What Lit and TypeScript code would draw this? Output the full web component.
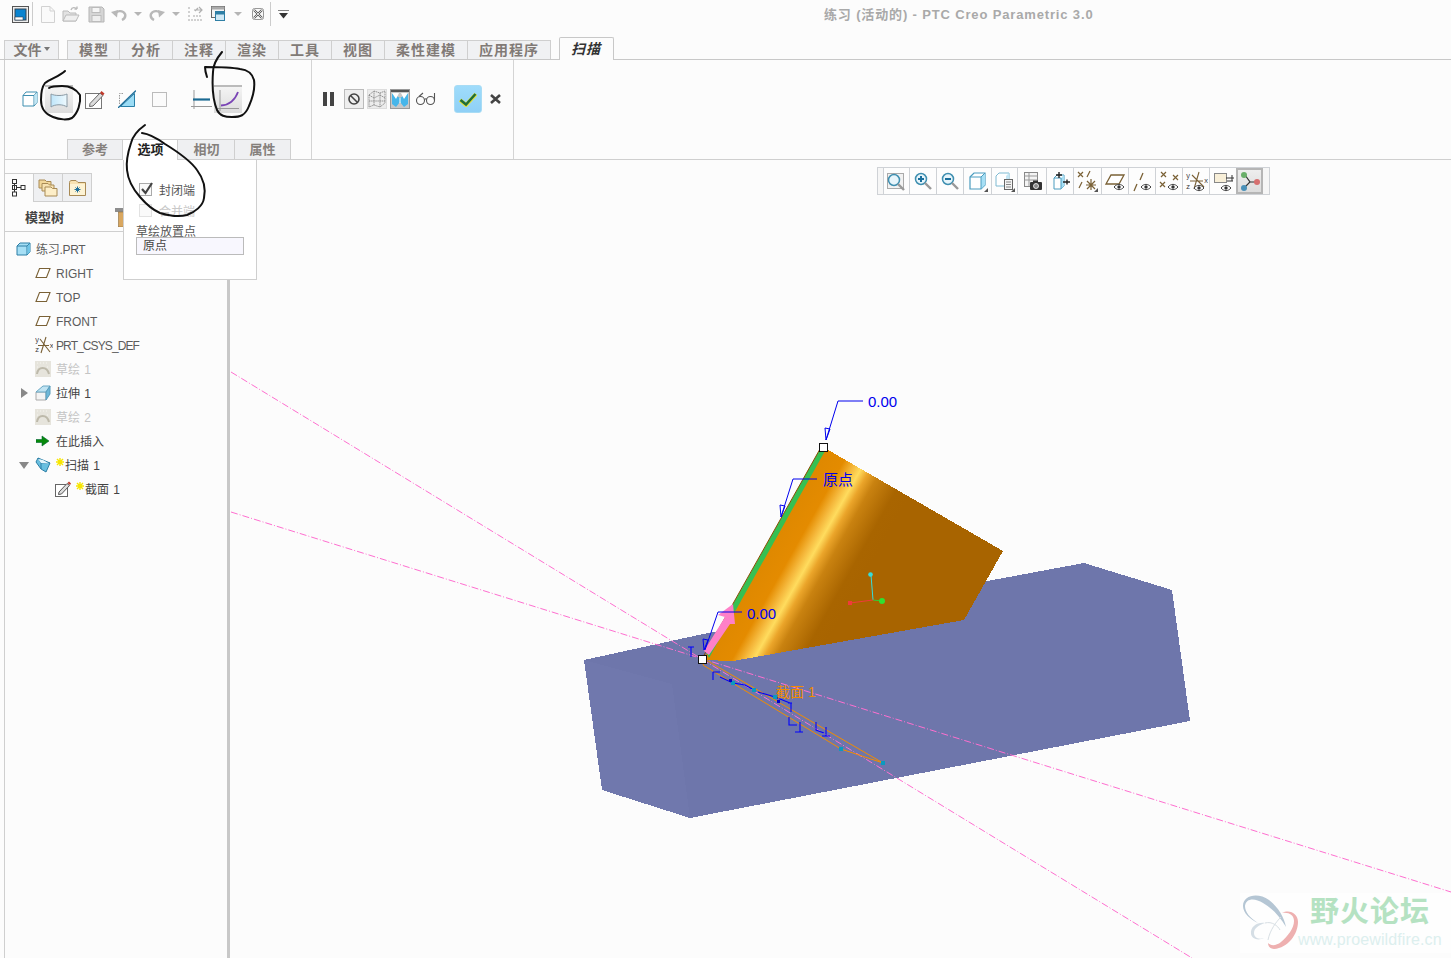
import { LitElement, html, css, svg } from "lit";
import { customElement } from "lit/decorators.js";

const sv = (w: number, h: number, body: unknown, cls = "") =>
  html`<svg class=${cls} width=${w} height=${h} viewBox="0 0 ${w} ${h}" fill="none">${body}</svg>`;

const caret = sv(8, 5, svg`<path d="M0 0H8L4 4Z" fill="#b5b5b5"/>`);

/* quick access toolbar */
const qat = {
  main: sv(17, 17, svg`<rect x=".5" y=".5" width="16" height="16" fill="#eee" stroke="#555"/><rect x="3" y="3" width="11" height="11" fill="#0a84d0" stroke="#345"/><rect x="3" y="11" width="8" height="3" fill="#fff" stroke="#345" stroke-width=".6"/>`),
  newf: sv(14, 17, svg`<path d="M.5.5H9L13.500 5V16.500H.5Z" fill="#fafafa" stroke="#d2d2d2"/><path d="M9 .5V5H13.500" stroke="#d2d2d2"/>`),
  open: sv(18, 17, svg`<path d="M1 5H6L8 7H14V15H1Z" fill="#e2e2e2" stroke="#bbb"/><path d="M1 15L4 9H17L14 15Z" fill="#efefef" stroke="#bbb"/><path d="M9 4C10 1 13 1 15 3M15 3V.5M15 3H12.500" stroke="#bbb" stroke-width="1.400"/>`),
  save: sv(17, 17, svg`<path d="M1 1H14L16 3V16H1Z" fill="#d5d5d5" stroke="#b5b5b5"/><rect x="4" y="1.500" width="8" height="5" fill="#f5f5f5" stroke="#bbb"/><rect x="4" y="9.500" width="9" height="6" fill="#eee" stroke="#bbb"/>`),
  undo: sv(16, 13, svg`<path d="M4 7C5 2 12 2 14 6C15 9 13 11 11 12" stroke="#b8b8b8" stroke-width="2.400"/><path d="M0 4L6 9.500L7 2Z" fill="#b8b8b8"/>`),
  redo: sv(16, 13, svg`<path d="M12 7C11 2 4 2 2 6C1 9 3 11 5 12" stroke="#b8b8b8" stroke-width="2.400"/><path d="M16 4L10 9.500L9 2Z" fill="#b8b8b8"/>`),
  regen: sv(16, 16, svg`<path d="M1 2H4M1 6H4M1 10H4M1 14H15M6 10H15" stroke="#c2c2c2" stroke-dasharray="2 1" stroke-width="1.500"/><path d="M7 4H15M12 1L15 4L12 7M11 2L8 5" stroke="#b0b0b0" stroke-width="1.200"/>`),
  wins: sv(18, 17, svg`<rect x=".5" y=".5" width="13" height="11" fill="#f4f4f4" stroke="#666"/><rect x=".5" y=".5" width="13" height="3" fill="#aaa"/><rect x="4.500" y="5.500" width="9" height="9" fill="#cfe8f5" stroke="#2f7fa5"/><rect x="4.500" y="5.500" width="9" height="3" fill="#2f7fa5"/>`),
  close: sv(12, 12, svg`<rect x=".5" y=".5" width="11" height="11" rx="2" fill="#fafafa" stroke="#999"/><path d="M2 2L10 10M10 2L2 10" stroke="#555" stroke-width="2.200"/><path d="M2 2L10 10M10 2L2 10" stroke="#fff" stroke-width=".8"/>`),
  menu: sv(11, 9, svg`<path d="M0 0H11" stroke="#333" stroke-width="1.200"/><path d="M1 3H10L5.500 8.500Z" fill="#333"/>`),
};

/* ribbon */
const rib = {
  solid: sv(16, 16, svg`<path d="M1 4.500L4 1H15V11.500L12 15H1Z" fill="#fff" stroke="#3f8fb0"/><path d="M1 4.500H12V15M12 4.500L15 1" stroke="#3f8fb0"/><path d="M12.500 4.500L15 1.500V11L12.500 14Z" fill="#bfe6f5"/>`),
  surf: sv(18, 17, svg`<defs><linearGradient id="sf" x1="0" x2="1" y1="0" y2="0"><stop offset="0" stop-color="#bfe6fa"/><stop offset="1" stop-color="#eef9fe"/></linearGradient></defs><path d="M1 2C5 4 13 4 17 2V15C13 12 5 12 1 15Z" fill="url(#sf)" stroke="#8a9aa5"/>`),
  sketch: sv(20, 19, svg`<rect x=".5" y="3.500" width="16" height="15" fill="#fff" stroke="#777"/><path d="M5 13.500L15 3L18 5.500L8 16L4.500 16.500Z" fill="#ddd" stroke="#666"/><path d="M15 3L16.500 1L19.500 3.500L18 5.500Z" fill="#c0392b"/>`),
  thick: sv(18, 18, svg`<path d="M5 3.500H1.500V15" stroke="#999" stroke-dasharray="1.500 1"/><path d="M2.500 16.500L16.500 3.500V16.500Z" fill="#9bdcf5" stroke="#2a80a8"/><path d="M0 18L18 .5" stroke="#1f6f9a" stroke-width="1.300"/>`),
  rect: sv(15, 15, svg`<rect x=".5" y=".5" width="14" height="14" fill="#fbfbfb" stroke="#bbb"/>`),
  plain: sv(21, 19, svg`<path d="M3 0V19M0 16.500H21" stroke="#999"/><path d="M2 9.500H19" stroke="#1b6a93" stroke-width="2.200"/>`),
  tang: sv(22, 21, svg`<path d="M3 0V21M0 18.500H22" stroke="#999"/><path d="M4 15.500C12 15 18 10 21 2" stroke="#7a45b5" stroke-width="1.800"/>`),
  pause: sv(11, 14, svg`<rect width="4" height="14" fill="#444"/><rect x="7" width="4" height="14" fill="#444"/>`),
  stop: sv(12, 12, svg`<circle cx="6" cy="6" r="5" stroke="#444" stroke-width="1.600"/><path d="M2.500 2.500L9.500 9.500" stroke="#444" stroke-width="1.600"/>`),
  wire: sv(18, 18, svg`<path d="M1 5L6 1L12 3L17 1V13L12 17L6 15L1 17Z M1 5L6 8L12 5L17 8M6 1V15M12 3V17M1 11L17 11" stroke="#707070" stroke-width=".7" stroke-dasharray="1.500 .6"/>`),
  shade: sv(18, 18, svg`<path d="M0 1H18" stroke="#555" stroke-width="2"/><path d="M1 3L9 8L17 3V14L13 17L9 12L5 17L1 14Z" fill="#47b6ea"/><path d="M1 3H8L5 9ZM10 3H17L13 9Z" fill="#fff"/><path d="M9 8V13" stroke="#fff"/>`),
  glasses: sv(20, 14, svg`<circle cx="4.500" cy="8.500" r="4" stroke="#555" stroke-width="1.100"/><circle cx="14.500" cy="8.500" r="4" stroke="#555" stroke-width="1.100"/><path d="M8.500 7.500C9.500 6.500 10.500 6.500 10.500 7.500M3 4.500L7 1M18.500 8V1" stroke="#555" stroke-width="1.100"/>`),
  check: sv(18, 15, svg`<path d="M1 8L7 13L17 2" stroke="#e7e23a" stroke-width="4"/><path d="M1.500 8L7 12.500L16.500 2" stroke="#1f6e3a" stroke-width="2.500"/>`),
  cancel: sv(11, 10, svg`<path d="M1 1L10 9M10 1L1 9" stroke="#444" stroke-width="2.600"/>`),
};

/* model tree panel */
const cube = sv(15, 14, svg`<path d="M1 4L4 1H14V10L11 13H1Z" fill="#a6dff5" stroke="#2c7fa6"/><path d="M1 4H11V13M11 4L14 1" stroke="#2c7fa6"/><path d="M11.500 4L14 1.500V10L11.500 12.500Z" fill="#6fc4e6"/>`);
const plane = sv(16, 12, svg`<path d="M4.500 1.500H15L11.500 10.500H1Z" fill="#fff" stroke="#7a6136" stroke-width="1.100"/>`);
const csys = sv(18, 18, svg`<path d="M11 1L6 17M5 3L15 16M3 9.500H14" stroke="#7a6136" stroke-width="1.100"/>
  <text x="0" y="6" class="micro">y</text><text x="0" y="16" class="micro">z</text><text x="14.500" y="12" class="micro">x</text>`);
const sk = sv(16, 16, svg`<rect width="16" height="16" fill="#e6e4dc"/><path d="M2 13C3 5 12 5 14 13" stroke="#bdb9aa" stroke-width="2"/><path d="M2 2H14M2 6H4M12 6H14" stroke="#f6f5f0" stroke-dasharray="1 2"/>`);
const ext = sv(16, 16, svg`<path d="M1 7H11V15H1Z" fill="#f4f4f4" stroke="#aaa"/><path d="M1 7L8 1H15L11 7Z" fill="#bfe3f2" stroke="#6aa8c4"/><path d="M11 7L15 1V9L11 15Z" fill="#6fb8d8" stroke="#5a9dbc"/>`);
const ins = sv(14, 12, svg`<path d="M0 4.500H6V1L13 6L6 11V7.500H0Z" fill="#078a0a" stroke="#063" stroke-width=".6"/>`, "insert");
const sweep = sv(16, 16, svg`<path d="M3 1L15 6L11 15L6 12L1 5Z" fill="#68bfe0" stroke="#2c7fa6"/><path d="M3 1L6 6L15 6M6 6L6 12" stroke="#2c7fa6"/><path d="M3 2L6 6L14 6.500L8 3Z" fill="#e5f5fb"/>`);
const secIco = sv(16, 16, svg`<rect x=".5" y="3.500" width="12" height="12" fill="#fff" stroke="#666"/><path d="M4 11L12 2.500L14.500 4.500L6.500 13L3.500 13.500Z" fill="#ddd" stroke="#555"/><path d="M12.500 2L14 .5L16 2.500L15 4Z" fill="#c0392b"/>`);
const star = sv(8, 8, svg`<path d="M4 0V8M0 4H8M1 1L7 7M7 1L1 7" stroke="#f7e600" stroke-width="1.400"/>`);
const arrR = sv(7, 10, svg`<path d="M0 0L7 5L0 10Z" fill="#888"/>`);
const arrD = sv(10, 7, svg`<path d="M0 0H10L5 7Z" fill="#888"/>`);

const tabTree = sv(14, 18, svg`<rect x=".5" y=".5" width="4" height="4" stroke="#333"/><rect x=".5" y="6.500" width="4" height="4" stroke="#333"/><rect x=".5" y="13" width="4" height="4" stroke="#333"/><rect x="9" y="6.500" width="4" height="4" stroke="#333"/><path d="M2.500 4.500V13M4.500 8.500H9" stroke="#333"/>`);
const tabFold = sv(20, 18, svg`<path d="M1 1H7L8.500 2.500H13V9H1Z" fill="#f2d79a" stroke="#a88a55"/><path d="M4 4.500H10L11.500 6H16V12H4Z" fill="#f7e2b2" stroke="#a88a55"/><path d="M7 8H13L14.500 9.500H19V17H7Z" fill="#fdeec8" stroke="#a88a55"/>`);
const tabStar = sv(17, 16, svg`<path d="M.5 2.500C.5 1 1.500.5 3 .5H7L9 2.500H16.500V15.500H.5Z" fill="#f7e2b2" stroke="#a88a55"/><rect x="1" y="4" width="15" height="11" fill="#fdf3d4"/><path d="M8.500 6.500V12.500M5.500 9.500H11.500M6.500 7.500L10.500 11.500M10.500 7.500L6.500 11.500" stroke="#1f6f9a"/>`);
const hammer = sv(9, 20, svg`<path d="M0 1H9V5H0Z" fill="#8d8d8d"/><rect x="3.500" y="5" width="5" height="15" fill="#d9a760" stroke="#8b6b3a" stroke-width=".6"/>`);

/* view toolbar */
const lens = (x: number, y: number, inner: unknown = null) => svg`<circle cx=${x} cy=${y} r="5.500" fill="#e7f5fb" stroke="#3f8fb0" stroke-width="1.500"/><path d="M${x + 4} ${y + 4}L${x + 10} ${y + 10}" stroke="#999" stroke-width="2.400"/>${inner}`;
const eye = (x: number, y: number) => svg`<path d="M${x - 5} ${y}C${x - 2} ${y - 3.500} ${x + 2} ${y - 3.500} ${x + 5} ${y}C${x + 2} ${y + 3.500} ${x - 2} ${y + 3.500} ${x - 5} ${y}Z" fill="#fff" stroke="#444"/><circle cx=${x} cy=${y} r="1.700" fill="#333"/>`;
const tri = svg`<path d="M22 22H18L22 18Z" fill="#555"/>`;
const brown = "#7a6136";
const vb = [
  svg`<rect x="2.500" y="3.500" width="16" height="15" fill="#f2f2f2" stroke="#aaa"/>${lens(9, 10)}`,
  lens(9, 9, svg`<path d="M6 9H12M9 6V12" stroke="#1a6f9d" stroke-width="2"/>`),
  lens(9, 9, svg`<path d="M6 9H12" stroke="#1a6f9d" stroke-width="2"/>`),
  svg`<path d="M4 7L8 3H19V15L15 19H4Z" fill="#fff" stroke="#4a9cbf" stroke-width="1.200"/><path d="M15 7V19L19 15V3Z" fill="#a6dff5"/><path d="M4 7H15V19M15 7L19 3" stroke="#4a9cbf"/>${tri}`,
  svg`<path d="M3 6L6 3H16V13L13 16H3Z" fill="#fff" stroke="#7fbad2"/><path d="M13 6V16L16 13V3Z" fill="#c5e7f5"/><rect x="11.500" y="9.500" width="8" height="10" fill="#f4f4f4" stroke="#666"/><path d="M13 12H18M13 14.500H18M13 17H18" stroke="#888"/>${tri}`,
  svg`<rect x="3.500" y="2.500" width="13" height="14" fill="#f4f4f4" stroke="#888"/><path d="M3.500 6H16.500M3.500 10H16.500M8 2.500V16" stroke="#999"/><rect x="9" y="12" width="12" height="8" rx="1" fill="#333"/><rect x="12" y="10.500" width="5" height="2" fill="#333"/><circle cx="15" cy="16" r="2.500" fill="#888" stroke="#fff" stroke-width=".8"/>`,
  svg`<path d="M5 8L8 5H15V16L12 19H5Z" fill="#fff" stroke="#4a9cbf"/><path d="M12 8V19L15 16V5Z" fill="#a6dff5"/><path d="M5 8H12V19" stroke="#4a9cbf"/><path d="M7 5H13M10 2V8M14 12H21M18 9.500V14.500" stroke="#222" stroke-width="1.400"/>`,
  svg`<path d="M2 2L7 7M7 2L2 7M14 1L11 7M3 18L6 12M11 11L19 19M19 11L11 19M15 9V20M10 15H20" stroke=${brown} stroke-width="1.200"/>${tri}`,
  svg`<path d="M7 5H20L15 14H2Z" fill="#fff" stroke=${brown} stroke-width="1.300"/>${eye(15, 17)}`,
  svg`<path d="M12 3L9 10M6 14L3 21" stroke=${brown} stroke-width="1.300"/>${eye(15, 17)}`,
  svg`<path d="M3 2L8 7M8 2L3 7M15 5L20 10M20 5L15 10M2 12L7 17M7 12L2 17" stroke=${brown} stroke-width="1.200"/>${eye(15, 17)}`,
  svg`<path d="M14 2L9 19M7 5L19 17M5 11H18" stroke=${brown} stroke-width="1.100"/><text x="1" y="8" class="micro">y</text><text x="1" y="19" class="micro">z</text><text x="19" y="13" class="micro">x</text>${eye(14, 18)}`,
  svg`<rect x="2.500" y="3.500" width="12" height="9" fill="#f8efd8" stroke="#888"/><path d="M14 8H22M20 5V11M15 11H21" stroke="#333"/>${eye(14, 18)}`,
  svg`<path d="M7 5L12 12L6 18M12 12H18" stroke="#333" stroke-width="1.200"/><circle cx="6" cy="5" r="3" fill="#6aaf6a"/><circle cx="19" cy="12" r="3" fill="#d67070"/><circle cx="6" cy="18" r="3" fill="#4a90b8"/>`,
];
const vbWidths = [26, 27, 27, 28, 26, 29, 27, 28, 27, 27, 27, 27, 27, 27];

const tabs = ["模型", "分析", "注释", "渲染", "工具", "视图", "柔性建模", "应用程序"];

@customElement("app-root")
export class AppRoot extends LitElement {
  static styles = css`
    :host {
      display: block;
      position: relative;
      width: 1451px;
      height: 958px;
      overflow: hidden;
      background: #fcfcfc;
      font-family: "Liberation Sans", "Noto Sans CJK SC", sans-serif;
      font-size: 12px;
      color: #555;
    }
    svg { display: block; flex: none; }
    .micro { font: 7px "Liberation Mono", monospace; fill: #333; }

    .top { display: flex; align-items: center; height: 28px; margin-bottom: 9px; }
    .qat { display: flex; align-items: center; width: 824px; padding-left: 12px; box-sizing: border-box; }
    .sep { width: 1px; height: 24px; background: #ccc; }
    .m2 { margin-left: 2px; } .m3 { margin-left: 3px; } .m5 { margin-left: 5px; } .m6 { margin-left: 6px; } .m7 { margin-left: 7px; }
    .m8 { margin-left: 8px; } .m10 { margin-left: 10px; } .m12 { margin-left: 12px; } .m13 { margin-left: 13px; }
    .m16 { margin-left: 16px; } .m18 { margin-left: 18px; } .m24 { margin-left: 24px; }
    .title { color: #a9a9a9; font-weight: bold; font-size: 13px; letter-spacing: 0.85px; white-space: nowrap; padding-bottom: 2px; }

    .tabrow { display: flex; align-items: flex-end; padding-left: 4px; border-bottom: 1px solid #c8c8c8; height: 22px; }
    .tab, .file {
      display: flex; align-items: center; justify-content: center; height: 16px; padding-bottom: 2px;
      background: #f0f1f3; border: 1px solid #cfcfcf; border-bottom: none;
      font-size: 14px; font-weight: bold; letter-spacing: 1px; color: #817a76;
    }
    .file { width: 53px; gap: 2px; letter-spacing: 0; margin-right: 8px; }
    .tab { padding-left: 11px; padding-right: 11px; border-left: none; }
    .tab.first { border-left: 1px solid #cfcfcf; padding-left: 11px; padding-right: 10px; }
    .tab.on {
      margin-left: 8px; height: 20px; margin-bottom: -1px; background: #fcfcfc; border: 1px solid #c8c8c8; border-bottom: none;
      border-radius: 2px 2px 0 0; font-style: italic; color: #333; padding-left: 11px; padding-right: 12px;
    }

    .ribbon { display: flex; height: 100px; margin-left: 4px; border-left: 1px solid #cfcfcf; border-bottom: 1px solid #cfcfcf; box-sizing: border-box; }
    .g1 { width: 307px; box-sizing: border-box; border-right: 1px solid #d4d4d4; display: flex; flex-direction: column; }
    .g2wrap { display: flex; border-right: 1px solid #d4d4d4; width: 202px; box-sizing: border-box; }
    .irow { display: flex; align-items: center; height: 78px; padding-left: 17px; box-sizing: border-box; }
    .irow.second { padding-left: 11px; }
    .btn { display: flex; align-items: center; justify-content: center; width: 28px; height: 28px; box-sizing: border-box; background: linear-gradient(#f4f4f4, #dcdcdc); border-top: 2px solid #bbb; }
    .btn.sm { width: 20px; height: 20px; border: 1px solid #bbb; background: #eee; }
    .btn.ghost { width: 20px; height: 20px; border: 1px solid #ddd; background: #ececec; }
    .btn.pressed { width: 20px; height: 20px; border: 1px solid #999; background: #c8c8c8; }
    .ok { display: flex; align-items: center; justify-content: center; width: 28px; height: 28px; border-radius: 3px; background: linear-gradient(#9fdcfb, #8fd0f6); border: 1px solid #a8dcf5; box-sizing: border-box; }

    .subtabs { display: flex; padding-left: 62px; height: 20px; margin-top: 1px; }
    .st {
      display: flex; align-items: center; justify-content: center; box-sizing: border-box;
      background: #eff0f2; border: 1px solid #cfcfcf; border-bottom: none; border-left: none; padding-bottom: 3px;
      font-weight: bold; font-size: 13px; color: #85807c; height: 20px; width: 56px;
    }
    .st.first { border-left: 1px solid #cfcfcf; }
    .st.wide { width: 57px; padding-left: 1px; }
    .st.on { background: #fff; color: #222; width: 55px; position: relative; z-index: 3; height: 21px; padding-bottom: 4px; padding-left: 1px; }

    .main { display: flex; height: 798px; }
    .side {
      width: 226px; margin-left: 4px; box-sizing: border-box; flex: none;
      border-left: 1px solid #cfcfcf; border-right: 3px solid #c8c8c8; padding-top: 13px;
    }
    .ptabs { display: flex; height: 29px; }
    .pt { display: flex; align-items: center; justify-content: center; width: 29px; height: 29px; box-sizing: border-box; background: #eff0f2; border: 1px solid #cfcfcf; border-left: none; }
    .pt.on { background: #fcfcfc; border-bottom: none; }
    .phead { display: flex; align-items: center; height: 30px; box-sizing: border-box; border-bottom: 1px solid #cfcfcf; padding-left: 20px; font-weight: bold; font-size: 13px; color: #444; }
    .phead .hm { margin-left: 51px; }
    .tree { padding-top: 5px; }
    .row { display: flex; align-items: center; height: 24px; white-space: nowrap; color: #5c5c5c; font-size: 12px; }
    .row.root { padding-left: 11px; gap: 5px; }
    .row.l1 { padding-left: 30px; }
    .row.l1 .tx { margin-left: 5px; }
    .row.l1 .tx.near { margin-left: 3px; }
    .row.ex { padding-left: 16px; }
    .row.ex.open { padding-left: 14px; }
    .arr { width: 14px; display: flex; flex: none; }
    .open .arr { width: 16px; }
    .row.l2 { padding-left: 50px; }
    .row.dim { color: #c4c4c4; }
    .ic { width: 16px; display: flex; justify-content: center; flex: none; margin-right: 5px; }
    .row.dark { color: #444; }
    .la { padding-top: 2px; }
    .cj { padding-bottom: 2px; word-spacing: 1px; }
    .tight { letter-spacing: -0.9px; }
    .tight2 { letter-spacing: -0.3px; }
    .sup { margin-bottom: 7px; margin-right: 1px; }

    .canvas { position: relative; flex: 1; }
    .scene { position: absolute; left: 0; top: 0; }
    .scene text.dim { font: 15px "Liberation Sans", "Noto Sans CJK SC", sans-serif; fill: #0000ee; }
    .scene text.sec { font: 14px "Liberation Sans", "Noto Sans CJK SC", sans-serif; fill: #f28c00; }
    .wm1 { font: bold 29px "Noto Sans CJK SC", sans-serif; fill: #b5e2c2; letter-spacing: 1px; }
    .wm2 { font: 16px "Liberation Sans", sans-serif; fill: #dcefee; letter-spacing: 0.12px; }

    .vbar { position: absolute; left: 647px; top: 7px; display: flex; height: 28px; box-sizing: border-box; border: 1px solid #cfd2d6; background: #f6f6f6; padding: 0 6px 0 5px; }
    .vb { height: 26px; box-sizing: border-box; border-left: 1px solid #cfd2d6; background: #fdfdfd; display: flex; align-items: center; justify-content: center; }
    .vb.on { background: linear-gradient(#eee, #dcdcdc); border: 2px solid #b5b5b5; }

    .pop { position: absolute; left: 123px; top: 159px; width: 134px; height: 121px; box-sizing: border-box; background: #fff; border: 1px solid #cfcfcf; z-index: 2; padding: 19px 12px 0; }
    .ck { display: flex; align-items: center; height: 21px; gap: 7px; padding-left: 3px; color: #555; }
    .ck.off { color: #c8c8c8; }
    .box { width: 13px; height: 13px; border: 1px solid #aaa; box-sizing: border-box; background: #fafafa; position: relative; flex: none; }
    .off .box { border-color: #e2e2e2; }
    .box svg { position: absolute; left: 0; top: -3px; }
    .lbl { margin-top: 2px; color: #555; line-height: 18px; height: 14px; }
    .sel { width: 108px; height: 18px; box-sizing: border-box; border: 1px solid #bbb; background: #f8f7fe; padding-left: 6px; line-height: 17px; color: #444; }
    .ink { position: absolute; left: 0; top: 0; z-index: 5; pointer-events: none; }
  `;

  render() {
    return html`
      <div class="top">
        <div class="qat">
          ${qat.main}<span class="sep m3"></span>
          <span class="m8">${qat.newf}</span><span class="m7">${qat.open}</span><span class="m8">${qat.save}</span>
          <span class="m6">${qat.undo}</span><span class="m7">${caret}</span>
          <span class="m7">${qat.redo}</span><span class="m7">${caret}</span>
          <span class="m7">${qat.regen}</span><span class="m8">${qat.wins}</span><span class="m5">${caret}</span>
          <span class="m10">${qat.close}</span><span class="sep m6"></span><span class="m7">${qat.menu}</span>
        </div>
        <div class="title">练习 (活动的) - PTC Creo Parametric 3.0</div>
      </div>

      <div class="tabrow">
        <div class="file">文件 ${sv(6, 4, svg`<path d="M0 0H6L3 4Z" fill="#777"/>`)}</div>
        ${tabs.map((t, i) => html`<div class="tab ${i === 0 ? "first" : ""}">${t}</div>`)}
        <div class="tab on">扫描</div>
      </div>

      <div class="ribbon">
        <div class="g1">
          <div class="irow">
            ${rib.solid}
            <div class="btn m7">${rib.surf}</div>
            <span class="m12">${rib.sketch}</span>
            <span class="m13">${rib.thick}</span>
            <span class="m16">${rib.rect}</span>
            <span class="m24">${rib.plain}</span>
            <div class="btn m2">${rib.tang}</div>
          </div>
          <div class="subtabs">
            <div class="st first">参考</div><div class="st on">选项</div><div class="st wide">相切</div><div class="st">属性</div>
          </div>
        </div>
        <div class="g2wrap">
          <div class="irow second">
            ${rib.pause}
            <div class="btn sm m10">${rib.stop}</div>
            <div class="btn ghost m3">${rib.wire}</div>
            <div class="btn pressed m3">${rib.shade}</div>
            <span class="m6">${rib.glasses}</span>
            <div class="ok m18">${rib.check}</div>
            <span class="m8">${rib.cancel}</span>
          </div>
        </div>
      </div>

      <div class="main">
        <div class="side">
          <div class="ptabs">
            <div class="pt on">${tabTree}</div><div class="pt">${tabFold}</div><div class="pt">${tabStar}</div>
          </div>
          <div class="phead">模型树<span class="hm">${hammer}</span></div>
          <div class="tree">
            <div class="row root">${cube}<span class="tight2 cj">练习.PRT</span></div>
            <div class="row l1">${plane}<span class="tx la">RIGHT</span></div>
            <div class="row l1">${plane}<span class="tx la">TOP</span></div>
            <div class="row l1">${plane}<span class="tx la">FRONT</span></div>
            <div class="row l1">${csys}<span class="tx near la tight">PRT_CSYS_DEF</span></div>
            <div class="row l1 dim">${sk}<span class="tx cj">草绘 1</span></div>
            <div class="row ex dark"><span class="arr">${arrR}</span>${ext}<span class="m5 cj">拉伸 1</span></div>
            <div class="row l1 dim">${sk}<span class="tx cj">草绘 2</span></div>
            <div class="row l1 dark"><span class="ic">${ins}</span><span class="cj">在此插入</span></div>
            <div class="row ex open dark"><span class="arr">${arrD}</span>${sweep}<span class="m5 sup">${star}</span><span class="cj">扫描 1</span></div>
            <div class="row l2 dark">${secIco}<span class="m5 sup">${star}</span><span class="cj">截面 1</span></div>
          </div>
        </div>

        <div class="canvas">
          <svg class="scene" width="1221" height="798" viewBox="230 160 1221 798">
            <defs>
              <linearGradient id="sg" gradientUnits="userSpaceOnUse" x1="703" y1="660" x2="790" y2="709">
                <stop offset="0" stop-color="#de8800"/><stop offset=".25" stop-color="#e48b00"/>
                <stop offset=".36" stop-color="#f5b83c"/><stop offset=".44" stop-color="#ffdc5e"/>
                <stop offset=".52" stop-color="#eba52a"/><stop offset=".62" stop-color="#c98210"/>
                <stop offset=".85" stop-color="#a96500"/><stop offset="1" stop-color="#a86400"/>
              </linearGradient>
            </defs>
            <g shape-rendering="crispEdges">
              <polygon points="584,660 703,634 1084,563 1172,590 1190,721 690,818 602,790" fill="#6e76ab"/>
              <polygon points="584,660 672,684 690,818 602,790" fill="#7078ad"/>
            </g>
            <polygon points="703,660 823,447 1003,551 964,620 733,661" fill="url(#sg)" shape-rendering="crispEdges"/>
            <polygon points="706,652 820,449 825,451 709,658" fill="#36c052"/>
            <path d="M703 657L820 449" stroke="#8a4a00" stroke-width="1"/>
            <path d="M231 372L1192 958M231 512L1451 892" stroke="#ff6fd0" stroke-width="1" stroke-dasharray="7 2 1 2"/>
            <polygon points="733,604 718,615 725,617 704,651 709,655 730,624 735,624" fill="#ff80c8"/>

            <g stroke="#f28c00" fill="none">
              <path d="M706 660L883 763L841 749L703 665Z"/>
            </g>
            <path d="M713 672V680M713 672H720M720 677L733 683L745 685L754 690M758 692L775 697L790 703M792 703H788M791 703V712M789 717V725H797M800 722V732M795 732H803M816 722V730L824 733M826 727V736M822 736H830M688 647H694M691 647V657" stroke="#0000ff" stroke-width="1.100" fill="none"/>
            <g fill="#0a9ac0">
              <rect x="731" y="681" width="4" height="4"/><rect x="752" y="688" width="4" height="4"/><rect x="773" y="695" width="4" height="4"/><rect x="839" y="747" width="4" height="4"/><rect x="881" y="761" width="4" height="4"/>
            </g>
            <g fill="#0000cc"><rect x="729" y="679" width="3" height="3"/><rect x="777" y="700" width="3" height="3"/></g>
            <text class="sec" x="776" y="697">截面 1</text>

            <path d="M863 401H838L826 440M817 479H793L781 517M742 612H718L705 650" stroke="#0000ee" fill="none"/>
            <path d="M826 440L830 429L825 428ZM781 517L785 506L780 505ZM704 650L708 640L703 639Z" stroke="#0000ee" fill="none"/>
            <text class="dim" x="868" y="406.500">0.00</text>
            <text class="dim" x="823" y="484.500">原点</text>
            <text class="dim" x="747" y="619">0.00</text>

            <rect x="819.500" y="443.500" width="8" height="8" fill="#fff" stroke="#111" stroke-width="1"/>
            <rect x="698.500" y="655.500" width="8" height="8" fill="#fff" stroke="#111" stroke-width="1"/>

            <path d="M871 575L873 600" stroke="#35dcdc"/><path d="M850 603L873 600" stroke="#f03a3a"/><path d="M873 600L882 601" stroke="#35cc35"/>
            <circle cx="870.500" cy="574.500" r="2.300" fill="#35dcdc"/><circle cx="882" cy="601" r="3" fill="#30e030"/><rect x="848" y="601" width="4" height="4" fill="#f03a3a"/>

            <rect x="1240" y="893" width="211" height="60" fill="#fefefe"/>
            <path d="M1243 906C1243 895 1258 892 1269 900C1278 907 1284 917 1286 927C1280 917 1272 908 1263 903C1255 898 1246 898 1245 906C1245 912 1250 918 1258 923C1250 919 1243 913 1243 906Z" fill="#b5c6d4"/>
            <path d="M1265 923C1257 922 1250 927 1251 934C1252 939 1258 941 1264 938C1258 940 1254 937 1254 933C1254 928 1259 925 1265 923Z" fill="#d5dee5"/>
            <path d="M1282 913C1290 909 1298 914 1298 922C1298 934 1288 948 1274 949C1270 949 1268 946 1268 943C1271 946 1276 946 1281 942C1288 936 1294 928 1294 921C1294 915 1289 912 1282 913Z" fill="#eeb0b0"/>
            <path d="M1265 923C1272 921 1278 926 1280 930M1281 917C1276 922 1270 930 1268 940" stroke="#d8dfe4" fill="none"/>
            <text class="wm1" x="1310" y="922">野火论坛</text>
            <text class="wm2" x="1298" y="945">www.proewildfire.cn</text>
          </svg>

          <div class="vbar">
            ${vb.map((b, i) => html`<div class="vb ${i === 13 ? "on" : ""}" style="width:${vbWidths[i]}px">${sv(23, 23, b)}</div>`)}
          </div>
        </div>
      </div>

      <div class="pop">
        <div class="ck"><span class="box">${sv(13, 15, svg`<path d="M2 8L5.500 12L12 2" stroke="#444" stroke-width="2.200"/>`)}</span><span>封闭端</span></div>
        <div class="ck off"><span class="box"></span><span>合并端</span></div>
        <div class="lbl">草绘放置点</div>
        <div class="sel">原点</div>
      </div>

      <svg class="ink" width="1451" height="958" viewBox="0 0 1451 958" fill="none" stroke="#111" stroke-width="2" stroke-linecap="round" stroke-linejoin="round">
        <path d="M65 71C60 76 50 79 45 83C41 88 41 95 41 100C41 107 43 113 53 117C60 120 68 120 72 118C78 113 81 103 80 95C76 89 70 86 62 86C56 86 52 86 49 88"/>
        <path d="M222 52C217 58 213 64 213 72C212 85 213 100 217 110C220 116 225 117 232 117C240 117 245 116 249 106C253 97 255 87 254 80C252 73 248 70 240 69C230 67 217 67 205 67C205 71 206 74 207 77"/>
        <path d="M145 125C138 130 133 135 131 143C128 152 126 162 127 170C128 180 132 188 140 197C146 204 153 210 160 213C170 216 180 217 187 215C195 212 203 206 204 198C206 188 203 178 197 170C190 160 178 152 165 144C158 139 150 134 142 133"/>
      </svg>
    `;
  }
}
